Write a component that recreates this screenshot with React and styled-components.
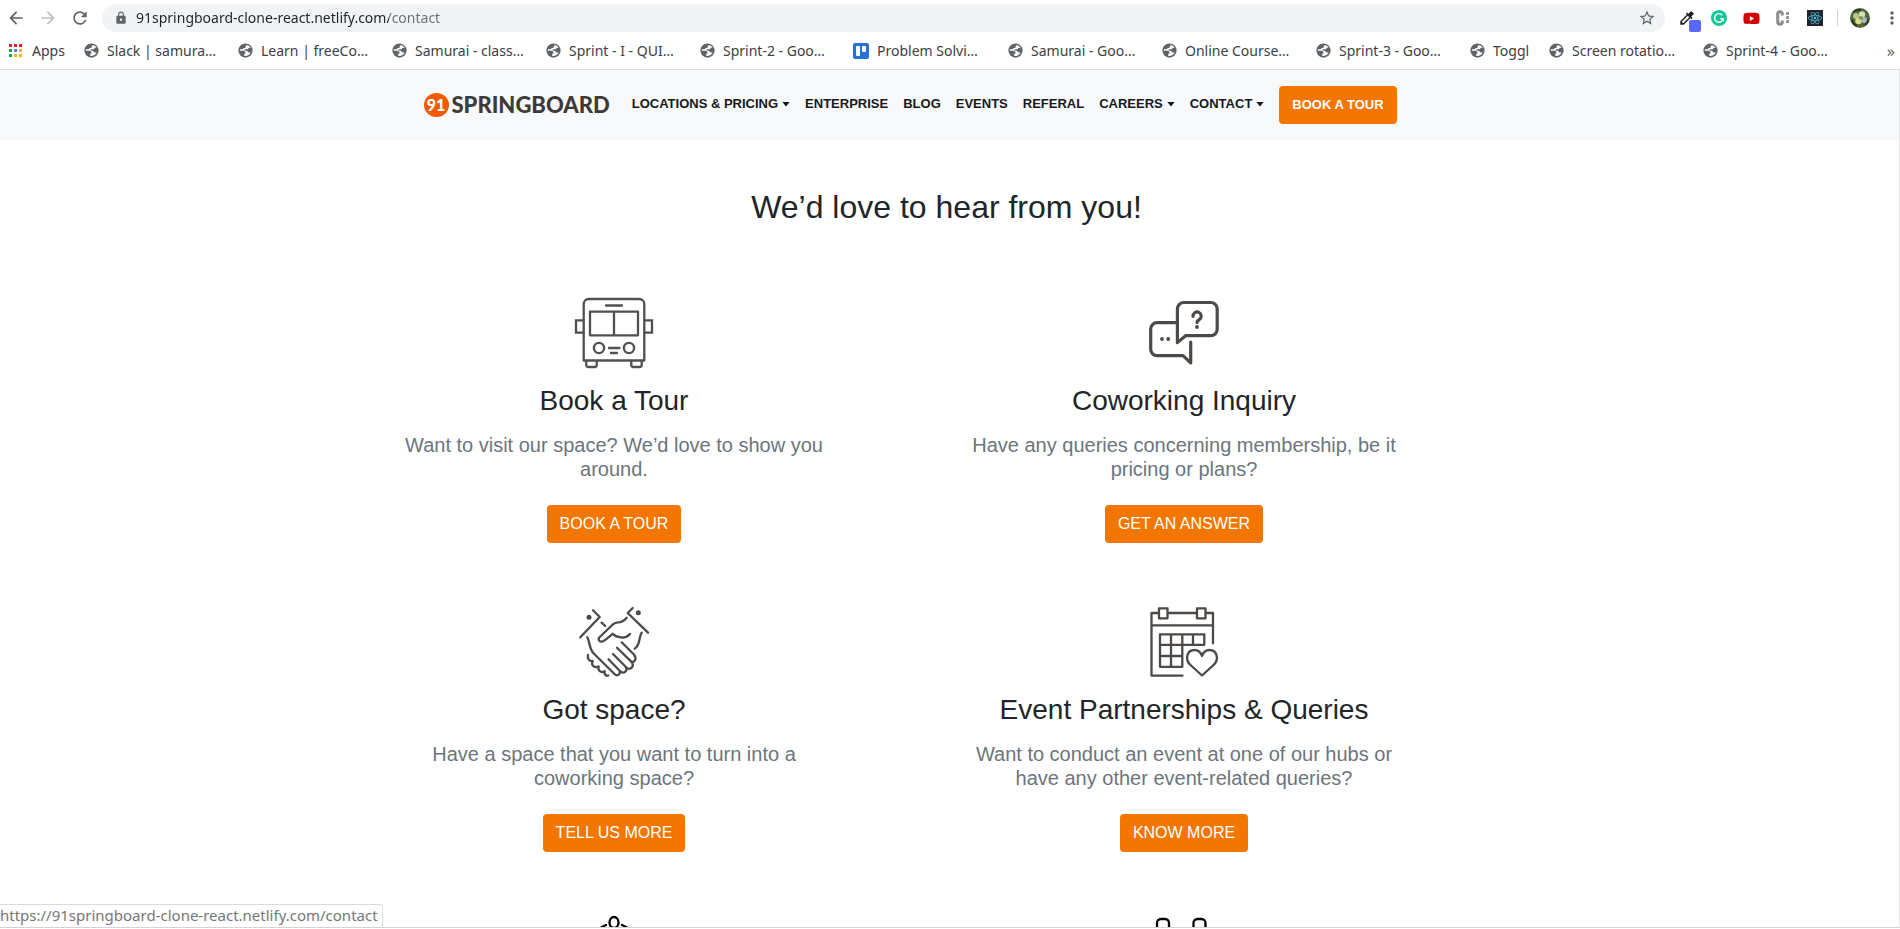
import React from "react";
import styled, { createGlobalStyle } from "styled-components";
import {
  MdArrowBack,
  MdArrowForward,
  MdRefresh,
  MdLock,
  MdStarBorder,
  MdMoreVert,
  MdColorize,
} from "react-icons/md";
import { FaReact, FaYoutube } from "react-icons/fa";

const GlobalStyle = createGlobalStyle`
  *, *::before, *::after { box-sizing: border-box; }
  body {
    margin: 0;
    background: #fff;
    color: #212529;
    font-family: "Liberation Sans", Arial, sans-serif;
  }
  h1, h2, p { margin: 0; font-weight: 400; }
  button { font-family: inherit; cursor: pointer; }
  a { color: inherit; text-decoration: none; }
  svg { display: block; flex: none; }
`;

const Window = styled.div`
  display: flex;
  flex-direction: column;
  height: 100vh;
  overflow: hidden;
  padding-bottom: 1px;
`;

/* ---------- browser chrome ---------- */

const Chrome = styled.div`
  flex: none;
  border-bottom: 1px solid #d9dbde;
  background: #fff;
  font-family: "Noto Sans", "Open Sans", sans-serif;
`;

const Toolbar = styled.div`
  display: flex;
  align-items: center;
  padding: 4px 0;
`;

const IconButton = styled.button`
  display: flex;
  align-items: center;
  justify-content: center;
  width: ${(p) => p.$width || 32}px;
  height: 28px;
  margin-left: ${(p) => p.$gap || 0}px;
  padding: 0;
  border: 0;
  background: none;
  color: ${(p) => p.$color || "#5f6368"};
  position: relative;
`;

const AddressBar = styled.label`
  display: flex;
  align-items: center;
  flex: 1;
  min-width: 0;
  height: 28px;
  margin-left: 6px;
  padding-left: 12px;
  border-radius: 14px;
  background: #f1f3f4;
  color: #5f6368;
`;

const AddressInput = styled.input`
  flex: 1;
  min-width: 0;
  margin-left: 8px;
  padding: 0;
  border: 0;
  outline: 0;
  font-family: inherit;
  font-size: 14px;
  line-height: 20px;
  color: #202124;
  background: linear-gradient(to right, #202124 253px, #6b6f73 253px);
  -webkit-background-clip: text;
  background-clip: text;
  -webkit-text-fill-color: transparent;
`;

const Extensions = styled.div`
  display: flex;
  align-items: center;
  margin-left: 6px;
`;

const ColorBadge = styled.span`
  position: absolute;
  right: 2px;
  bottom: 0;
  width: 12px;
  height: 12px;
  border-radius: 2px;
  background: #5b67fb;
`;

const Divider = styled.span`
  width: 1px;
  height: 16px;
  margin: 0 12px 0 6px;
  background: #cfd2d5;
`;

const Bookmarks = styled.nav`
  display: flex;
  align-items: center;
  height: 33px;
  padding: 0 5px 4px 8px;
  font-size: 14px;
  line-height: 20px;
  color: #3c4043;
`;

const Bookmark = styled.a`
  display: flex;
  align-items: center;
  gap: 8px;
  flex: none;
  width: ${(p) => p.$width || 154}px;
  white-space: nowrap;
`;

const Overflow = styled.button`
  margin-left: auto;
  padding: 0;
  border: 0;
  background: none;
  font-size: 16px;
  line-height: 20px;
  color: #5f6368;
`;

const StatusBubble = styled.div`
  position: absolute;
  left: 0;
  bottom: 0;
  height: 23px;
  padding: 0 4px 0 0;
  border: 1px solid #d9dbde;
  border-width: 1px 1px 0 0;
  border-radius: 0 4px 0 0;
  background: #fff;
  color: #75787b;
  font-family: "Noto Sans", "Open Sans", sans-serif;
  font-size: 15px;
  line-height: 21px;
`;

/* ---------- site ---------- */

const Viewport = styled.div`
  position: relative;
  flex: 1;
  min-height: 0;
  overflow: hidden;
  border-right: 1px solid #e4e6e8;
  border-bottom: 1px solid #d4d4d4;
`;

const SiteHeader = styled.header`
  background: #f8f9fb;
`;

const HeaderInner = styled.div`
  display: flex;
  align-items: center;
  max-width: 1140px;
  height: 70px;
  margin: 0 auto;
  padding: 0 44px;
`;

const Logo = styled.a`
  display: flex;
  align-items: center;
  gap: 3px;
  margin-right: 22px;
  font-family: Lato, sans-serif;
  font-size: 22px;
  font-weight: 900;
  line-height: 26px;
  color: #3e3a39;
`;

const LogoMark = styled.span`
  display: flex;
  align-items: center;
  justify-content: center;
  width: 25px;
  height: 24px;
  border-radius: 50%;
  background: #f15a00;
  color: #fff;
  font-size: 16px;
`;

const Menu = styled.nav`
  display: flex;
  align-items: center;
  gap: 15px;
`;

const MenuLink = styled.a`
  display: flex;
  align-items: center;
  gap: 4px;
  padding-bottom: 2px;
  font-size: 13px;
  font-weight: 700;
  line-height: 20px;
  color: #16181b;
  white-space: nowrap;
`;

const Button = styled.button`
  height: 38px;
  padding: 0 13px;
  border: 0;
  border-radius: 4px;
  background: #f27600;
  color: #fff;
  font-size: ${(p) => (p.$compact ? 13 : 16)}px;
  font-weight: ${(p) => (p.$compact ? 700 : 400)};
  line-height: 24px;
  white-space: nowrap;
`;

const Title = styled.h1`
  padding: 48px 6px 72px 0;
  font-size: 32px;
  line-height: 38px;
  text-align: center;
`;

const CardGrid = styled.main`
  display: grid;
  grid-template-columns: 1fr 1fr;
  row-gap: 64px;
  max-width: 1241px;
  margin: 0 auto;
  padding-right: 101px;
`;

const Card = styled.section`
  display: flex;
  flex-direction: column;
  align-items: center;
  text-align: center;
`;

const CardTitle = styled.h2`
  margin: 16px 0;
  font-size: 28px;
  line-height: 33px;
`;

const CardText = styled.p`
  max-width: 440px;
  margin-bottom: 24px;
  font-size: 20px;
  line-height: 24px;
  color: #6c757d;
`;

/* ---------- drawings ---------- */

const Line = styled.svg.attrs({ fill: "none", strokeLinecap: "round", strokeLinejoin: "round", "aria-hidden": true })`
  stroke: ${(p) => p.$color || "#4d4946"};
  stroke-width: ${(p) => p.$weight || 2.3};
  overflow: visible;
`;

const CaretIcon = () => (
  <svg width="8" height="5" viewBox="0 0 8 5" aria-hidden="true">
    <path d="M.4 0h7.200L4 4.600Z" fill="#16181b" />
  </svg>
);

const BusIcon = () => (
  <Line width="78" height="70" viewBox="0 0 78 70" $color="#505050">
    <path d="M8.700 62.500V6a5 5 0 0 1 5-5h50.600a5 5 0 0 1 5 5v56.500Z" />
    <path d="M31 7.500h16M15 13.700h48v23.600H15ZM39 13.700v23.600" />
    <path d="M8.700 22.300H1v12.400h7.700M69.300 22.300H77v12.400h-7.700" strokeLinejoin="miter" />
    <circle cx="24" cy="50" r="5.100" />
    <circle cx="54" cy="50" r="5.100" />
    <path d="M34 50h10.500M36 55h6" />
    <path d="M11.300 63v4.200a1.800 1.800 0 0 0 1.800 1.800h6.800a1.800 1.800 0 0 0 1.800-1.800V63M56.300 63v4.200a1.800 1.800 0 0 0 1.800 1.800h6.800a1.800 1.800 0 0 0 1.800-1.800V63" />
  </Line>
);

const ChatIcon = () => (
  <Line width="70" height="70" viewBox="0 0 70 70" $weight={3.2}>
    <path d="M28.400 44.600V11a6.500 6.500 0 0 1 6.500-6.500h26.800a6.500 6.500 0 0 1 6.500 6.500v20.200a6.500 6.500 0 0 1-6.500 6.500H36.600Z" />
    <path d="M27 24.700H8.100a6.400 6.400 0 0 0-6.400 6.400v20.200a6.400 6.400 0 0 0 6.400 6.400H34l7.700 7.200V44.200" />
    <path d="M44 18.400a4.100 4.100 0 1 1 6.400 3.100q-2.400 1.400-2.400 3.100" />
    <g fill="#4d4946" stroke="none">
      <circle cx="48" cy="29" r="1.900" />
      <circle cx="13" cy="41" r="1.900" />
      <circle cx="19.200" cy="41" r="1.900" />
    </g>
  </Line>
);

const HandshakeIcon = () => (
  <Line width="70" height="70" viewBox="0 0 70 70">
    <path d="M14 3.300 20.700 10 1.300 30.300M22.600 15.600l3.600 3.400M53.700 1l-5 5L69 25.700" />
    <path d="M47.700 10.800C45 14 44 14.800 41 15.200c-4.500.4-5.500.6-7.500 2.600L20.300 30.500c-1.800 2.600.7 4.700 3.200 4 2.500-.6 3-1.800 10.200-7.700 3.300 3.700 12.500 5.900 17.300.2" />
    <path d="M62.700 25.600c-2.700 4.200-1.700 10.600-5 14.200l-2 2" />
    <path d="M8.300 30.300c2.700 4.200 1.500 11.300 6.500 16.200L35.500 67c3 3 7.500-.5 4.500-4L29.500 52.200" />
    <path d="M34 47l12.200 12.200c3.600 4-1.200 8.300-4.600 5.200M38 40.700l14.500 14.200c3.600 4.600-1.800 9.400-5.600 5.200M42.700 35.300l12.200 12.200c3.800 4.500-.4 9.400-3 6.500" />
    <path d="M9 48c-.8 3.600 1.200 6.600 4.700 6-2 4.500 2 7.400 6 5.400-1.200 4.400 2.300 6.800 6 4.800-.8 3.200 1.600 5.200 3.500 4.300" />
    <g fill="#4d4946" stroke="none">
      <circle cx="10" cy="10.300" r="2.500" />
      <circle cx="59.300" cy="5.700" r="2.500" />
    </g>
  </Line>
);

const CalendarIcon = () => (
  <Line width="70" height="70" viewBox="0 0 70 70">
    <path d="M64 36.300V6H2.500v62.600H33.500M2.500 18.300H64" />
    <path d="M10 1.300h8.500v10H10ZM48 1.300h8.500v10H48Z" fill="#fff" />
    <path d="M11 27.300h44.300v10.500H11ZM11 27.300v32.500h22.300V27.300M22 27.300v32.500M44 27.300v10.500M11 49h22.300" />
    <path d="M53 68.500 41.500 58c-6-5.500-3.600-15 4-15 4 0 6.300 2.500 7.500 6 1.200-3.500 3.500-6 7.500-6 7.600 0 10 9.500 4 15Z" />
  </Line>
);

const CommunityIcon = () => (
  <Line width="70" height="70" viewBox="0 0 70 70" $color="#000">
    <ellipse cx="35" cy="6.500" rx="4.500" ry="5.500" />
    <path d="M27 9c-10 4-18 13-18 25M43 9c10 4 18 13 18 25" />
  </Line>
);

const SeatsIcon = () => (
  <Line width="70" height="70" viewBox="0 0 70 70" $color="#000">
    <path d="M8 16V7a4 4 0 0 1 4-4h4a4 4 0 0 1 4 4v9M44.500 16V7a4 4 0 0 1 4-4h4a4 4 0 0 1 4 4v9" />
  </Line>
);

const GlobeIcon = () => (
  <svg width="15" height="15" viewBox="0 0 16 16" aria-hidden="true">
    <circle cx="8" cy="8" r="7.600" fill="#5f6368" />
    <path
      fill="#fff"
      d="M9.500 2.200 8 3.600v1.600H6.200L4.800 6.700H2.100L1.900 8.200h4.600l1.500 1.500v1.500H6.700v2.700c3.200.4 5.600-1.300 6.800-3.700H11.200L9.700 8.600 6.700 7.800l.5-1.100h3.200l1.200-1.600h2C12.600 3.600 11.200 2.600 9.500 2.200Z"
    />
  </svg>
);

const TrelloIcon = () => (
  <svg width="16" height="16" viewBox="0 0 16 16" aria-hidden="true">
    <rect width="16" height="16" rx="2" fill="#2573d5" />
    <rect x="3" y="3" width="4" height="10" rx="1" fill="#fff" />
    <rect x="9" y="3" width="4" height="6" rx="1" fill="#fff" />
  </svg>
);

const AppsIcon = () => (
  <svg width="16" height="14" viewBox="0 0 16 14" aria-hidden="true">
    {["#ea1d2c", "#ea1d2c", "#ea1d2c", "#12a150", "#4285f4", "#fbb605", "#12a150", "#fbb605", "#fbb605"].map((fill, i) => (
      <rect key={i} x={1 + (i % 3) * 5} y={Math.floor(i / 3) * 5} width="3" height="3" fill={fill} />
    ))}
  </svg>
);

const GrammarlyIcon = () => (
  <svg width="16" height="16" viewBox="0 0 16 16" aria-hidden="true">
    <circle cx="8" cy="8" r="8" fill="#11c997" />
    <path d="M11.200 5.200a4.300 4.300 0 1 0 .9 3.600H9.200M12.100 8.800v2.400" fill="none" stroke="#fff" strokeWidth="1.400" />
  </svg>
);

const ClockifyIcon = () => (
  <svg width="16" height="16" viewBox="0 0 16 16" aria-hidden="true">
    <path d="M7.300 5.500V4a2.300 2.300 0 0 0-4.600 0v8a2.300 2.300 0 0 0 4.600 0V10.500" fill="none" stroke="#8d8d8d" strokeWidth="3" />
    <g fill="#8d8d8d">
      {[2, 6, 10].map((y) => (
        <rect key={y} x="11" y={y} width="3" height="3" rx="1" />
      ))}
    </g>
  </svg>
);

const ReactTile = styled.span`
  display: flex;
  align-items: center;
  justify-content: center;
  width: 16px;
  height: 16px;
  background: #20232a;
  color: #4fc3e8;
`;

const YoutubeTile = styled.span`
  display: flex;
  color: #d40000;
  background: linear-gradient(#fff, #fff) center / 6px 6px no-repeat;
`;

const AvatarIcon = () => (
  <svg width="20" height="20" viewBox="0 0 20 20" aria-hidden="true">
    <circle cx="10" cy="10" r="10" fill="#53663a" />
    <circle cx="6" cy="8" r="3" fill="#b6c78e" />
    <circle cx="12" cy="6.500" r="3.200" fill="#d5dbc0" />
    <circle cx="14" cy="12" r="3" fill="#a9b4c8" />
    <circle cx="8.500" cy="13" r="3.200" fill="#d9d98a" />
    <circle cx="11" cy="10" r="2" fill="#7f9b3f" />
    <path d="M3 4q4-3 8-2M2 12q1 4 5 6M15 17q3-2 3-6" stroke="#26321c" strokeWidth="1.500" fill="none" />
  </svg>
);

/* ---------- content ---------- */

const bookmarks = [
  { label: "Slack | samura…" },
  { label: "Learn | freeCo…" },
  { label: "Samurai - class…" },
  { label: "Sprint - I - QUI…" },
  { label: "Sprint-2 - Goo…", width: 153 },
  { label: "Problem Solvi…", icon: TrelloIcon, width: 155 },
  { label: "Samurai - Goo…" },
  { label: "Online Course…" },
  { label: "Sprint-3 - Goo…" },
  { label: "Toggl", width: 79 },
  { label: "Screen rotatio…" },
  { label: "Sprint-4 - Goo…" },
];

const menu = [
  { label: "LOCATIONS & PRICING", dropdown: true },
  { label: "ENTERPRISE" },
  { label: "BLOG" },
  { label: "EVENTS" },
  { label: "REFERAL" },
  { label: "CAREERS", dropdown: true },
  { label: "CONTACT", dropdown: true },
];

const cards = [
  {
    icon: BusIcon,
    title: "Book a Tour",
    text: "Want to visit our space? We’d love to show you around.",
    action: "BOOK A TOUR",
  },
  {
    icon: ChatIcon,
    title: "Coworking Inquiry",
    text: "Have any queries concerning membership, be it pricing or plans?",
    action: "GET AN ANSWER",
  },
  {
    icon: HandshakeIcon,
    title: "Got space?",
    text: "Have a space that you want to turn into a coworking space?",
    action: "TELL US MORE",
  },
  {
    icon: CalendarIcon,
    title: "Event Partnerships & Queries",
    text: "Want to conduct an event at one of our hubs or have any other event-related queries?",
    action: "KNOW MORE",
  },
  { icon: CommunityIcon },
  { icon: SeatsIcon },
];

const BrowserChrome = () => (
  <Chrome>
    <Toolbar>
      <IconButton aria-label="Back"><MdArrowBack size={20} /></IconButton>
      <IconButton aria-label="Forward" $color="#bdc1c6"><MdArrowForward size={20} /></IconButton>
      <IconButton aria-label="Reload"><MdRefresh size={20} /></IconButton>
      <AddressBar>
        <MdLock size={14} />
        <AddressInput aria-label="Address" defaultValue="91springboard-clone-react.netlify.com/contact" />
        <IconButton aria-label="Bookmark this page" $width={36}><MdStarBorder size={18} /></IconButton>
      </AddressBar>
      <Extensions>
        <IconButton aria-label="Color picker" $color="#222">
          <MdColorize size={18} />
          <ColorBadge />
        </IconButton>
        <IconButton aria-label="Writing assistant"><GrammarlyIcon /></IconButton>
        <IconButton aria-label="Video"><YoutubeTile><FaYoutube size={17} /></YoutubeTile></IconButton>
        <IconButton aria-label="Timer"><ClockifyIcon /></IconButton>
        <IconButton aria-label="React tools"><ReactTile><FaReact size={14} /></ReactTile></IconButton>
        <Divider />
        <IconButton aria-label="Profile" $width={20}><AvatarIcon /></IconButton>
        <IconButton aria-label="Menu" $width={16} $gap={14}><MdMoreVert size={20} /></IconButton>
      </Extensions>
    </Toolbar>
    <Bookmarks aria-label="Bookmarks">
      <Bookmark href="#" $width={76}><AppsIcon />Apps</Bookmark>
      {bookmarks.map(({ label, width, icon: Icon = GlobeIcon }) => (
        <Bookmark key={label} href="#" $width={width}><Icon />{label}</Bookmark>
      ))}
      <Overflow aria-label="More bookmarks">»</Overflow>
    </Bookmarks>
  </Chrome>
);

export default function App() {
  return (
    <Window>
      <GlobalStyle />
      <BrowserChrome />
      <Viewport>
        <SiteHeader>
          <HeaderInner>
            <Logo href="#"><LogoMark>91</LogoMark>SPRINGBOARD</Logo>
            <Menu>
              {menu.map(({ label, dropdown }) => (
                <MenuLink key={label} href="#">
                  {label}
                  {dropdown && <CaretIcon />}
                </MenuLink>
              ))}
              <Button $compact>BOOK A TOUR</Button>
            </Menu>
          </HeaderInner>
        </SiteHeader>
        <Title>We’d love to hear from you!</Title>
        <CardGrid>
          {cards.map(({ icon: Icon, title, text, action }, i) => (
            <Card key={i}>
              <Icon />
              {title && <CardTitle>{title}</CardTitle>}
              {text && <CardText>{text}</CardText>}
              {action && <Button>{action}</Button>}
            </Card>
          ))}
        </CardGrid>
        <StatusBubble>https://91springboard-clone-react.netlify.com/contact</StatusBubble>
      </Viewport>
    </Window>
  );
}
